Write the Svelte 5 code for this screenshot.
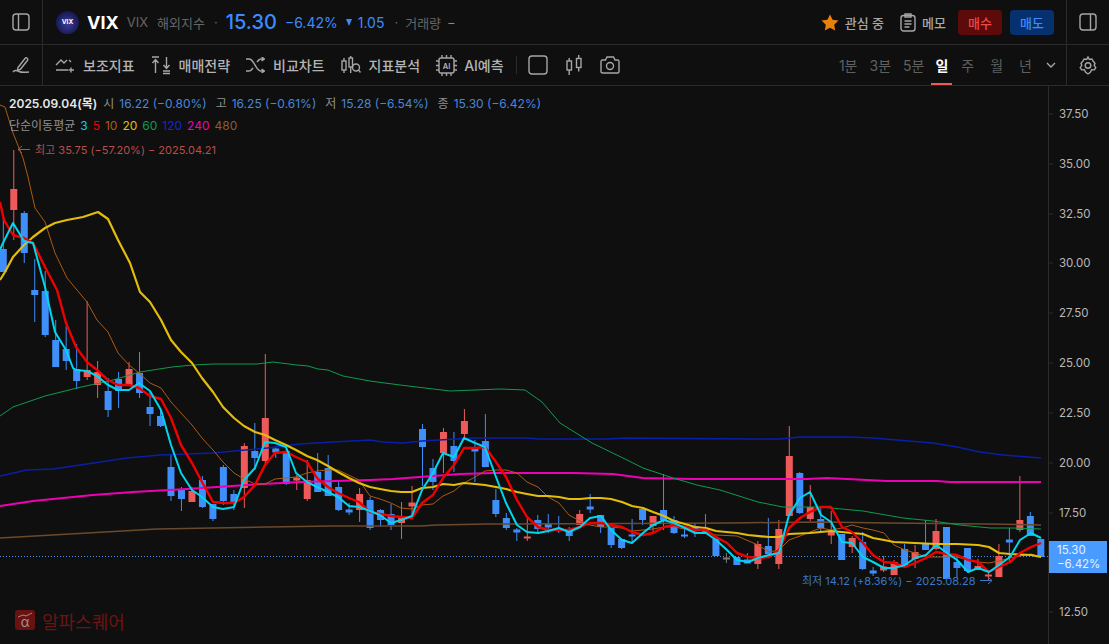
<script lang="ts">
  // [high, body top, body bottom, low, colour], in chart pixels
  const candles = [
    [214,249,272,272,'b'],[150,189,210,240,'r'],[211,213,253,263,'b'],[259,290,295,322,'b'],[271,291,335,337,'b'],
    [320,340,367,367,'b'],[326,349,361,370,'b'],[344,369,381,389,'b'],[301,370,377,380,'r'],[361,372,385,398,'r'],
    [378,391,410,417,'b'],[372,379,391,408,'b'],[362,369,385,386,'r'],[352,373,393,398,'b'],[392,407,414,426,'b'],
    [410,416,426,427,'b'],[455,467,496,501,'b'],[487,490,499,511,'b'],[487,491,502,502,'r'],[476,480,507,508,'b'],
    [504,504,519,521,'b'],[465,467,501,505,'b'],[490,494,502,510,'b'],[443,446,488,508,'r'],[423,451,458,470,'b'],
    [354,418,461,466,'r'],[447,449,452,458,'b'],[444,451,484,485,'b'],[475,478,480,490,'r'],[460,480,499,501,'r'],
    [453,472,492,492,'b'],[455,468,496,496,'b'],[480,487,510,511,'b'],[503,510,512,515,'b'],[488,494,510,522,'r'],
    [497,500,528,530,'b'],[509,510,520,527,'b'],[504,514,525,530,'b'],[502,518,523,539,'r'],[486,503,506,515,'r'],
    [424,429,447,486,'b'],[459,468,482,490,'b'],[428,432,453,473,'r'],[432,446,461,472,'b'],[409,421,434,440,'r'],
    [440,449,451,482,'b'],[414,441,467,467,'b'],[489,500,514,517,'b'],[513,518,528,530,'b'],[528,530,532,541,'b'],
    [518,537,538,541,'r'],[515,520,529,533,'b'],[514,524,527,533,'b'],[516,529,530,533,'b'],[527,530,536,541,'b'],
    [510,514,525,525,'r'],[494,507,509,513,'b'],[515,515,527,533,'b'],[528,528,545,548,'b'],[539,539,548,549,'b'],
    [519,535,536,543,'b'],[507,509,520,525,'b'],[516,516,526,532,'r'],[474,510,520,530,'b'],[516,520,533,534,'b'],
    [527,535,536,538,'b'],[524,526,530,537,'b'],[514,529,533,534,'b'],[537,539,556,556,'b'],[553,558,558.6,563,'g'],
    [557,557,565,565,'b'],[553,560,563,563,'b'],[541,544,564,569,'r'],[518,546,554,554,'b'],[520,529,564,569,'r'],
    [426,456,516,516,'r'],[472,473,513,514,'b'],[485,507,519,521,'r'],[506,519,528,532,'b'],[511,532,535,544,'r'],
    [534,534,560,560,'b'],[536,538,547,553,'r'],[532,542,569,570,'b'],[567,571,573,576,'b'],[556,567,570,572,'r'],
    [560,562,575,575,'r'],[544,549,565,566,'b'],[545,552,559,568,'r'],[520,544,550,550,'b'],[519,531,549,550,'r'],
    [527,527,579,579,'b'],[556,562,568,578,'b'],[548,548,571,572,'b'],[559,566,570,570,'r'],[570,575,576,581,'r'],
    [544,556,577,577,'r'],[528,540,542,562,'b'],[476,520,530,532,'r'],[512,516,536,536,'b'],[539,539,557,557,'b']
  ];
  const fill = { b: '#3f8ffb', r: '#ee5a5a', g: '#777777' };

  const lines = [
    { color: '#6b4a2c', width: 1.5, pts: '0,538 157,529 213,528 267,527 333,526 420,526 437,525 487,524 730,523 820,522 887,523 987,524 1041,525' },
    { color: '#0a1fa8', width: 1.5, pts: '0,476 27,470 53,469 87,464 127,458 160,455 213,453 267,448 300,444 333,442 370,440 383,442 403,443 422,441 473,438 527,438 540,439 607,439 627,438 753,439 780,439 800,437 850,437 873,438 933,443 957,447 980,452 1003,455 1041,458' },
    { color: '#f000b4', width: 2, pts: '0,506 33,501 93,495 133,492 187,489 247,485 300,482 370,480 393,479 460,474 493,473 573,473 613,474 643,478 693,479 807,479 827,478 887,481 937,481 950,482 1041,482' },
    { color: '#0f9a50', width: 1, pts: '0,416 13,407 45,396 77,388 113,380 140,372 172,367 193,365 213,364 257,364 273,362 297,365 308,366 318,369 328,370 343,376 370,381 400,385 450,391 500,389 525,390 542,402 560,423 592,443 623,458 643,468 673,478 697,485 720,490 758,502 783,507 820,507 863,511 903,518 933,521 960,525 990,528 1013,528 1041,529' },
    { color: '#ad5a12', width: 1, pts: '0,105 5,107 13,133 23,158 28,177 35,208 45,222 55,253 67,278 87,302 97,320 108,332 118,353 129,365 139,373 150,383 161,388 171,402 181,413 192,425 202,438 213,450 223,462 234,473 244,479 255,484 265,484 275,479 286,478 296,477 307,473 317,471 328,470 338,470 359,480 370,496 380,499 391,503 401,508 412,509 422,505 433,504 443,496 454,491 464,483 475,477 485,471 496,470 506,470 517,473 527,482 538,487 548,497 559,503 569,515 580,521 590,525 601,527 611,527 622,528 632,531 643,530 653,529 664,527 674,527 685,529 695,532 706,533 716,535 737,536 758,545 769,552 779,550 789,540 800,536 810,532 821,528 831,530 842,528 852,525 863,528 873,530 884,533 894,545 905,550 915,553 926,557 936,557 957,557 968,560 978,562 989,563 999,561 1010,558 1020,556 1031,554 1041,557' },
    { color: '#e3bd0a', width: 2.2, pts: '0,280 5,272 13,257 24,245 33,237 45,228 55,223 67,220 83,217 98,212 108,219 118,240 130,263 140,292 150,302 161,320 171,340 181,352 192,363 202,378 213,392 223,407 234,418 244,426 255,432 265,435 275,440 286,445 296,450 307,456 317,460 328,466 338,472 349,478 359,483 370,487 380,489 391,491 401,492 412,492 422,488 433,487 443,484 454,485 464,483 475,484 485,485 496,487 506,489 517,492 527,494 538,496 548,496 559,497 569,499 580,499 590,498 601,498 611,499 622,502 632,506 643,508 653,512 664,516 674,521 685,524 695,527 706,528 716,531 737,533 748,535 769,537 779,537 789,534 810,533 831,531 852,533 863,534 873,538 884,540 894,542 915,543 936,544 957,544 978,545 989,547 999,553 1010,554 1031,555 1041,557' },
    { color: '#f00000', width: 2.4, pts: '0,202 4,220 13,235 24,238 33,243 45,267 57,290 66,323 76,347 87,362 97,370 108,380 118,385 129,385 139,388 150,396 161,399 171,418 181,445 192,463 202,482 213,502 223,503 234,503 244,497 255,485 265,465 275,453 286,452 296,457 307,462 317,478 328,487 338,493 349,498 359,502 370,512 380,514 391,516 401,517 412,518 422,503 433,495 443,478 454,465 464,448 475,448 485,447 496,462 506,477 517,500 527,517 538,527 548,530 559,530 569,530 580,527 590,523 601,523 611,525 622,527 632,532 643,535 653,533 664,527 674,525 685,527 695,530 706,530 716,537 727,543 737,553 748,557 758,558 769,557 779,550 789,528 800,518 810,512 821,507 831,507 842,527 852,532 863,543 873,555 884,562 894,563 905,567 915,563 926,558 936,552 947,554 957,555 968,560 978,562 989,572 999,567 1010,562 1020,553 1031,547 1041,543' },
    { color: '#00d6ee', width: 2, pts: '0,250 2,245 13,223 24,241 33,243 45,287 49,305 55,332 66,350 73,368 76,370 87,371 97,376 108,385 118,390 129,390 139,383 150,391 161,410 171,445 181,473 192,490 202,497 213,507 223,509 234,507 244,480 255,468 265,442 275,443 286,447 296,473 307,482 317,487 328,492 338,497 349,506 359,507 370,511 380,515 391,523 401,520 412,516 422,490 433,473 443,453 454,457 464,438 475,443 485,447 496,477 506,503 517,525 527,532 538,533 548,531 559,528 569,532 580,527 590,518 601,516 611,530 622,540 632,543 643,533 653,525 664,520 674,523 685,528 695,533 706,533 716,540 727,550 737,560 748,562 758,558 769,555 779,553 789,515 800,498 810,492 821,515 831,522 842,542 852,543 863,557 873,562 884,568 894,568 905,565 915,558 926,555 936,545 947,553 957,560 968,572 978,568 989,572 999,565 1010,557 1020,540 1031,533 1041,538' }
  ];

  const ticks = [
    ['37.50',114],['35.00',164],['32.50',214],['30.00',263],['27.50',313],
    ['25.00',363],['22.50',413],['20.00',463],['17.50',513],['12.50',612]
  ];
  const tools = ['보조지표','매매전략','비교차트','지표분석','AI예측'];
  const frames = ['1분','3분','5분','일','주','월','년'];
  const mas = [['3','#00d6ee'],['5','#f00000'],['10','#ad5a12'],['20','#e3bd0a'],['60','#0f9a50'],['120','#1226d8'],['240','#f000b4'],['480','#8a5c34']];
</script>

<div class="app">
  <header class="row top">
    <div class="cell">
      <svg class="ic" width="18" height="18" viewBox="0 0 18 18"><rect x="1" y="1" width="16" height="16" rx="3"/><path d="M6.5 1v16"/></svg>
    </div>
    <div class="info">
      <div class="logo">VIX</div>
      <span class="sym">VIX</span>
      <span class="sub">VIX</span>
      <span class="sub kr">해외지수</span>
      <span class="sep">·</span>
      <span class="price">15.30</span>
      <span class="chg">−6.42%</span>
      <span class="tri"></span>
      <span class="chg diff">1.05</span>
      <span class="sep sep2">·</span>
      <span class="sub vol">거래량</span>
      <span class="sub dash">−</span>
    </div>
    <div class="actions">
      <svg width="18" height="17" viewBox="0 0 18 17"><path fill="#e8800a" d="M9 .5l2.6 5.3 5.9.8-4.3 4.1 1 5.8L9 13.8l-5.2 2.7 1-5.8L.5 6.6l5.9-.8z"/></svg>
      <span class="act">관심 중</span>
      <svg class="ic memo" width="16" height="19" viewBox="0 0 16 19"><rect x="1" y="2.5" width="14" height="15.5" rx="2.5"/><path d="M5 1h6v3H5zM4.5 8h7M4.5 11h7M4.5 14h5"/></svg>
      <span class="act">메모</span>
      <button class="buy">매수</button>
      <button class="sell">매도</button>
    </div>
    <div class="cell right">
      <svg class="ic" width="18" height="18" viewBox="0 0 18 18"><rect x="1" y="1" width="16" height="16" rx="3"/><path d="M11.5 1v16"/></svg>
    </div>
  </header>

  <nav class="row bar">
    <div class="cell">
      <svg class="ic" width="18" height="18" viewBox="0 0 18 18"><path d="M6 11.5l7-9c.6-.7 1.5-.8 2.2-.2.7.6.8 1.5.2 2.2l-7 8.8-2.9 1zM1 16c2-3 4-1.500 6-.5 2 1 5 1 10 .5"/></svg>
    </div>
    <div class="tools">
      <svg class="ic" width="20" height="18" viewBox="0 0 20 18"><path d="M1 9l5-5 3 3 3-3 M14 4l2 2M1 14h12M16 11.500v5M13.500 14H19"/></svg>
      <span class="tool">{tools[0]}</span>
      <svg class="ic t" width="20" height="20" viewBox="0 0 20 20"><path d="M1 2h7M4.500 18V5M1.500 8l3-3.500 3 3.500M12 16h7M15.500 2v11M12.500 10l3 3.500 3-3.500M12 18.500h7"/></svg>
      <span class="tool">{tools[1]}</span>
      <svg class="ic t" width="19" height="16" viewBox="0 0 19 16"><path d="M0 2h3c3 0 4 3 6 6s3 6 6 6h3M0 14h3c2 0 3-1.500 4-3M11 5c1-1.500 2-3 4-3h3M15.500 0l3 2-3 2M15.500 12l3 2-3 2"/></svg>
      <span class="tool">{tools[2]}</span>
      <svg class="ic t" width="20" height="20" viewBox="0 0 20 20"><rect x="1" y="6" width="4" height="9"/><path d="M3 3v3M3 15v3"/><rect x="8" y="3" width="3.500" height="9"/><path d="M9.700 1v2M9.700 12v6"/><circle cx="15" cy="12.500" r="3.500"/><path d="M17.500 15l2 2.500"/></svg>
      <span class="tool">{tools[3]}</span>
      <svg class="ic t" width="21" height="21" viewBox="0 0 21 21"><rect x="3" y="3" width="15" height="15" rx="2"/><path d="M6 0v3M10.500 0v3M15 0v3M6 18v3M10.500 18v3M15 18v3M0 6h3M0 10.500h3M0 15h3M18 6h3M18 10.500h3M18 15h3"/><text x="10.500" y="13.500" class="ai">AI</text></svg>
      <span class="tool ai-label">{tools[4]}</span>
      <span class="vline"></span>
      <svg class="ic t2" width="20" height="20" viewBox="0 0 20 20"><rect x="1" y="1" width="18" height="18" rx="3"/></svg>
      <svg class="ic t3" width="16" height="21" viewBox="0 0 16 21"><rect x="1" y="6" width="4.500" height="9"/><path d="M3.200 3v3M3.200 15v5"/><rect x="10.500" y="3.500" width="4.500" height="9"/><path d="M12.700 0v3.500M12.700 12.500v4"/></svg>
      <svg class="ic t4" width="20" height="18" viewBox="0 0 20 18"><path d="M1 5.500q0-1.500 1.500-1.500h3L7 1h6.500L15 4h2.500Q19 4 19 5.500V15.500q0 1.500-1.500 1.500h-15Q1 17 1 15.500z"/><circle cx="10" cy="10" r="3.500"/></svg>
    </div>
    <div class="frames">
      {#each frames as f}
        <span class="frame" class:on={f === '일'}>{f}</span>
      {/each}
      <svg class="ic chev" width="10" height="6" viewBox="0 0 10 6"><path d="M1 1l4 4 4-4"/></svg>
    </div>
    <div class="cell right">
      <svg class="ic" width="18" height="19" viewBox="0 0 18 19"><path d="M9 1l1.300 2.400 2.600-.4 1.300 2.300L16 7.300 15.200 9.500 16.800 11.700l-1.500 2.200-2.600-.1L11.300 16.300 9 18l-2.300-1.700-1.400-2.500-2.600.1-1.500-2.200 1.600-2.200L2 7.300l1.800-2 1.300-2.300 2.600.4z" /><circle cx="9" cy="9.500" r="2.800"/></svg>
    </div>
  </nav>

  <main class="chart">
    <svg class="plot" width="1109" height="558" viewBox="0 86 1109 558">
      <line class="axis" x1="1048.500" y1="86" x2="1048.500" y2="644"/>
      {#each ticks as t}
        <line class="axis" x1="1048" x2="1053" y1={t[1]} y2={t[1]}/>
        <text class="tick" x="1059" y={+t[1] + 4}>{t[0]}</text>
      {/each}
      <line class="last" x1="0" y1="556.500" x2="1048" y2="556.500"/>
      <g class="wm">
        <rect x="15" y="610" width="20" height="20" rx="3" fill="#6a1212"/>
        <path d="M18 617l5-2 3 1 6-3" fill="none" stroke="#9a8a8a" stroke-width="1"/>
      </g>
      <text class="alpha" x="25" y="627">α</text>
      {#each candles as c, i}
        {@const x = 3.3 + i * 10.48}
        <line x1={x} x2={x} y1={c[0]} y2={c[3]} stroke={fill[c[4]]} stroke-width="1"/>
        {#if c[2] - c[1] < 4}
          <rect x={x - 3.500} y={c[1] - 0.500} width="7" height={Math.max(+c[2] - +c[1] + 1, 2)} fill={fill[c[4]]}/>
        {:else}
          <rect x={x - 3.500} y={c[1]} width="7" height={+c[2] - +c[1]} fill={fill[c[4]]}/>
        {/if}
      {/each}
      {#each lines as l}
        <polyline points={l.pts} fill="none" stroke={l.color} stroke-width={l.width} stroke-linejoin="round"/>
      {/each}
      <rect x="1049" y="541" width="58" height="32" fill="#4a9bff"/>
      <text class="tag" x="1057" y="554">15.30</text>
      <text class="tag" x="1057" y="568">−6.42%</text>
    </svg>

    <div class="legend">
      <div class="ohlc">
        <b>2025.09.04(목)</b>
        <span class="k">시</span><span class="v">16.22 (−0.80%)</span>
        <span class="k">고</span><span class="v">16.25 (−0.61%)</span>
        <span class="k">저</span><span class="v">15.28 (−6.54%)</span>
        <span class="k">종</span><span class="v">15.30 (−6.42%)</span>
      </div>
      <div class="mas">
        <span class="k">단순이동평균</span>
        {#each mas as m}
          <span style="color: {m[1]}">{m[0]}</span>
        {/each}
      </div>
    </div>
    <div class="peak hi">
      <svg width="14" height="9" viewBox="0 0 14 9"><path d="M13 4.500H1M5 1L1 4.500 5 8"/></svg>
      최고 35.75 (−57.20%) − 2025.04.21
    </div>
    <div class="peak lo">
      최저 14.12 (+8.36%) − 2025.08.28
      <svg width="14" height="9" viewBox="0 0 14 9"><path d="M1 4.500h12M9 1l4 3.500L9 8"/></svg>
    </div>
    <div class="brand">알파스퀘어</div>
  </main>
</div>

<style>
  :global(body) {
    background-color: #0f0f0f;
  }

  .app {
    width: 1109px;
    height: 644px;
    overflow: hidden;
    background-color: #0f0f0f;
    font-family: "Inter", "Noto Sans CJK KR", sans-serif;
    color: #b8b8b8;
  }

  .row {
    display: flex;
    align-items: center;
    border-bottom: 1px solid #2b2b2b;
    box-sizing: border-box;
  }

  .top {
    height: 45px;
  }

  .bar {
    height: 41px;
  }

  .cell {
    width: 43px;
    height: 100%;
    flex: none;
    display: flex;
    align-items: center;
    justify-content: center;
    border-right: 1px solid #2b2b2b;
    box-sizing: border-box;
  }

  .cell.right {
    border-right: none;
    border-left: 1px solid #2b2b2b;
  }

  .ic {
    fill: none;
    stroke: #a6a6a6;
    stroke-width: 1.4;
    flex: none;
  }

  .info {
    display: flex;
    align-items: center;
    padding-left: 13px;
    flex: 1;
    white-space: nowrap;
  }

  .logo {
    width: 23px;
    height: 23px;
    border-radius: 50%;
    background: radial-gradient(circle at 50% 55%, #3b3f9c, #15154a 75%);
    color: #fff;
    font-size: 6.500px;
    font-weight: 700;
    line-height: 23px;
    text-align: center;
    margin-right: 8px;
  }

  .sym {
    font-size: 18px;
    font-weight: 700;
    color: #fff;
    margin-right: 8px;
  }

  .sub {
    font-size: 13px;
    color: #666;
  }

  .kr {
    margin-left: 9px;
  }

  .sep {
    color: #666;
    font-size: 13px;
    margin: 0 8px 0 9px;
  }

  .price {
    font-size: 20px;
    font-weight: 500;
    color: #3b8bff;
    margin-right: 8px;
  }

  .chg {
    font-size: 14px;
    color: #3b8bff;
  }

  .tri {
    width: 0;
    height: 0;
    border-left: 3.500px solid transparent;
    border-right: 3.500px solid transparent;
    border-top: 7px solid #3b8bff;
    margin: 0 6px 0 8px;
  }

  .diff {
    margin-right: 10px;
  }

  .sep2 {
    margin: 0 7px 0 0;
  }

  .dash {
    margin-left: 6px;
    color: #888;
  }

  .actions {
    display: flex;
    align-items: center;
    padding-right: 12px;
    flex: none;
  }

  .act {
    font-size: 13px;
    font-weight: 500;
    color: #a8a8a8;
    margin-left: 6px;
    white-space: nowrap;
  }

  .memo {
    margin-left: 16px;
  }

  .actions .act + button {
    margin-left: 12px;
  }

  button {
    width: 44px;
    height: 25px;
    border: none;
    border-radius: 4px;
    padding: 0;
    font: inherit;
    font-size: 13px;
    font-weight: 500;
  }

  .buy {
    background-color: #5c0a0a;
    color: #f04848;
  }

  .sell {
    background-color: #07306e;
    color: #3b8bff;
    margin-left: 8px;
  }

  .tools {
    display: flex;
    align-items: center;
    padding-left: 12px;
    flex: 1;
    white-space: nowrap;
  }

  .tool {
    font-size: 14px;
    font-weight: 500;
    color: #b4b4b4;
    margin-left: 8px;
  }

  .t {
    margin-left: 16px;
  }

  .ai {
    font-size: 7.500px;
    font-weight: 600;
    text-anchor: middle;
    fill: #b4b4b4;
    stroke: none;
  }

  .ai-label {
    margin-left: 7px;
  }

  .vline {
    width: 1px;
    height: 18px;
    background-color: #2b2b2b;
    margin: 0 11px 0 12px;
  }

  .t3 {
    margin-left: 18px;
  }

  .t4 {
    margin-left: 18px;
  }

  .frames {
    display: flex;
    align-items: center;
    height: 100%;
    flex: none;
    padding-right: 10px;
  }

  .frame {
    display: flex;
    align-items: center;
    box-sizing: border-box;
    height: 100%;
    padding: 2px 5px 0;
    margin: 0 1px;
    font-size: 14px;
    color: #5f5f5f;
    border-bottom: 2px solid transparent;
  }

  .frame.on {
    color: #fff;
    font-weight: 700;
    border-bottom-color: #ee5a5a;
    padding: 2px 4px 0;
  }

  .frame:nth-child(n+4):not(.on) {
    padding: 2px 7px 0;
  }

  .chev {
    margin-left: 6px;
  }

  .chart {
    position: relative;
    height: 558px;
  }

  .plot {
    display: block;
  }

  .axis {
    stroke: #2b2b2b;
    stroke-width: 1;
  }

  .tick {
    font-size: 11.500px;
    fill: #b8b8b8;
  }

  .last {
    stroke: #4a90e8;
    stroke-width: 1;
    stroke-dasharray: 1 2;
  }

  .tag {
    font-size: 11.500px;
    fill: #e6f0ff;
  }

  .alpha {
    font-size: 13px;
    fill: #a09898;
    text-anchor: middle;
  }

  .legend {
    position: absolute;
    left: 9px;
    top: 10px;
    font-size: 12px;
    line-height: 16px;
    white-space: nowrap;
  }

  .ohlc {
    display: flex;
  }

  .ohlc b {
    color: #e8e8e8;
    font-weight: 600;
    margin-right: 6px;
  }

  .k {
    color: #909090;
    margin-right: 5px;
  }

  .v {
    color: #4a86d8;
    margin-right: 9px;
  }

  .mas {
    display: flex;
    gap: 5px;
    margin-top: 6px;
  }

  .mas .k {
    margin-right: 0;
  }

  .peak {
    position: absolute;
    display: flex;
    align-items: center;
    gap: 4px;
    font-size: 11px;
    white-space: nowrap;
  }

  .peak svg {
    fill: none;
    stroke: currentColor;
    stroke-width: 1;
  }

  .hi {
    left: 17px;
    top: 55px;
    color: #b84e4e;
  }

  .lo {
    left: 802px;
    top: 486px;
    color: #3a78c8;
  }

  .brand {
    position: absolute;
    left: 42px;
    top: 522px;
    font-size: 18px;
    color: #6a1515;
    white-space: nowrap;
  }
</style>
